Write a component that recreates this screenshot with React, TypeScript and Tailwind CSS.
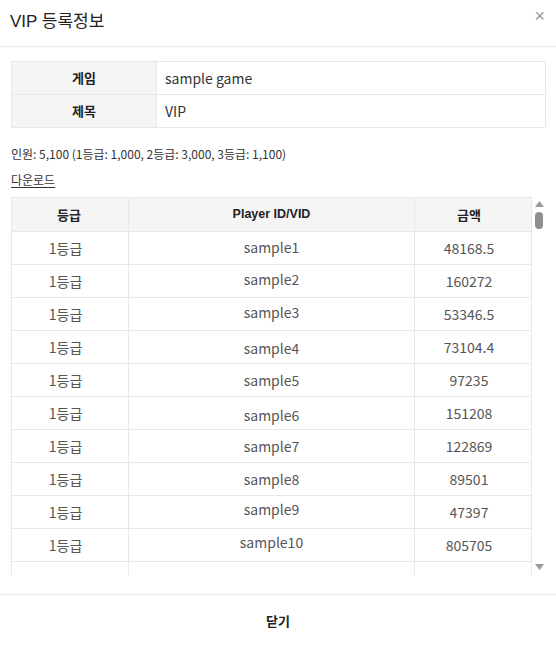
import React from "react";

const rows: [string, string, string, string][] = [
  ["1등급", "sample1", "48168.5", "-translate-y-[1px]"],
  ["1등급", "sample2", "160272", "-translate-y-[2px]"],
  ["1등급", "sample3", "53346.5", "-translate-y-[2px]"],
  ["1등급", "sample4", "73104.4", "translate-y-[1px]"],
  ["1등급", "sample5", "97235", "translate-y-0"],
  ["1등급", "sample6", "151208", "translate-y-[2px]"],
  ["1등급", "sample7", "122869", "translate-y-0"],
  ["1등급", "sample8", "89501", "translate-y-0"],
  ["1등급", "sample9", "47397", "-translate-y-[3px]"],
  ["1등급", "sample10", "805705", "-translate-y-[3px]"],
  ["", "", "", ""],
];

const body = { fontFamily: '"Noto Sans CJK KR", "Noto Sans", sans-serif' };
const arial = { fontFamily: '"Liberation Sans", "Noto Sans CJK KR", sans-serif' };

export default function App() {
  return (
    <div className="w-[556px] h-[646px] bg-white flex flex-col overflow-hidden" style={body}>
      <div className="h-[47px] shrink-0 flex items-center justify-between pl-[10px] pr-[11px] border-b border-[#ebebeb]">
        <div className="text-[17px] text-[#222] leading-none pb-[4px]" style={arial}>VIP 등록정보</div>
        <div className="text-[18px] text-[#999] leading-none pb-[14px]" style={arial}>×</div>
      </div>

      <div className="flex-1 flex flex-col pl-[11px] pr-[10px] pt-[14px] min-h-0">
        <div className="border border-[#e8e8e8]">
          <div className="flex h-[33px] border-b border-[#e8e8e8]">
            <div className="w-[145px] shrink-0 bg-[#f5f5f5] border-r border-[#e8e8e8] flex items-center justify-center text-[13px] font-bold text-[#222]">게임</div>
            <div className="flex-1 flex items-center pl-[8px] text-[14px] text-[#333]">sample game</div>
          </div>
          <div className="flex h-[32px]">
            <div className="w-[145px] shrink-0 bg-[#f5f5f5] border-r border-[#e8e8e8] flex items-center justify-center text-[13px] font-bold text-[#222]">제목</div>
            <div className="flex-1 flex items-center pl-[8px] text-[14px] text-[#333]">VIP</div>
          </div>
        </div>

        <div className="mt-[16px] text-[12px] text-[#333] leading-[20px]">인원: 5,100 (1등급: 1,000, 2등급: 3,000, 3등급: 1,100)</div>
        <div className="mt-[6px] text-[12px] text-[#333] leading-[20px] underline underline-offset-2">다운로드</div>

        <div className="mt-[7px] flex h-[378px] overflow-hidden">
          <div className="w-[521px] shrink-0 border-l border-t border-[#e8e8e8]">
            <div className="flex h-[34px] bg-[#f5f5f5] border-b border-[#e8e8e8] text-[13px] font-bold text-[#222]">
              <div className="w-[117px] shrink-0 flex items-center justify-center pr-[2px] border-r border-[#e8e8e8]">등급</div>
              <div className="w-[286px] shrink-0 flex items-center justify-center border-r border-[#e8e8e8] text-[12.5px]" style={arial}>Player ID/VID</div>
              <div className="flex-1 flex items-center justify-center pr-[8px] border-r border-[#e8e8e8]">금액</div>
            </div>
            {rows.map((r, i) => (
              <div key={i} className="flex h-[33px] border-b border-[#e8e8e8] text-[14px] text-[#555]">
                <div className="w-[117px] shrink-0 flex items-center justify-center pr-[9px] border-r border-[#e8e8e8]">{r[0]}</div>
                <div className="w-[286px] shrink-0 flex items-center justify-center border-r border-[#e8e8e8]">
                  <span className={r[3]}>{r[1]}</span>
                </div>
                <div className="flex-1 flex items-center justify-center pr-[8px] border-r border-[#e8e8e8]">{r[2]}</div>
              </div>
            ))}
          </div>
          <div className="flex-1 flex flex-col items-center pt-[4px] pb-[5px]">
            <svg width="9" height="6" viewBox="0 0 9 6"><path d="M4.5 0L9 6H0z" fill="#9a9a9a" /></svg>
            <div className="mt-[5px] w-[8px] h-[17px] rounded-full bg-[#8f8f8f]" />
            <div className="flex-1" />
            <svg width="9" height="6" viewBox="0 0 9 6"><path d="M0 0H9L4.5 6z" fill="#9a9a9a" /></svg>
          </div>
        </div>
      </div>

      <div className="h-[52px] shrink-0 border-t border-[#ebebeb] flex items-center justify-center">
        <div className="text-[13px] font-bold text-[#222]">닫기</div>
      </div>
    </div>
  );
}
